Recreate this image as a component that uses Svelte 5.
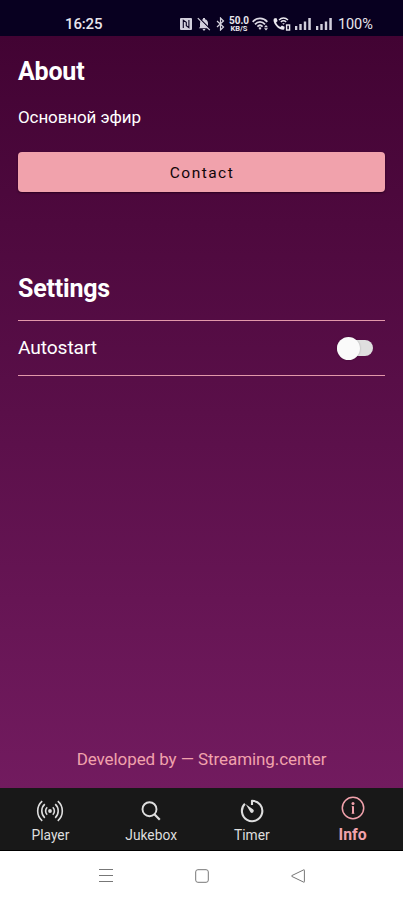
<script>
    let active = "Info";
    let autostart = false;

    const tabs = ["Player", "Jukebox", "Timer", "Info"];
    const signals = [0, 1];

    function handleClickToggle() {
        autostart = !autostart;
    }
</script>

<div class="phone">
    <header class="status">
        <span class="time">16:25</span>
        <div class="status-icons">
            <svg class="nfc" width="12" height="12" viewBox="0 0 12 12">
                <rect x="0" y="0" width="12" height="12" rx="1" fill="#d2cfdc" />
                <path d="M3.300 10V2.300l3 2V8M8.900 2v7.700l-2.600-2V4" fill="none" stroke="#080020" stroke-width="1.100" />
            </svg>
            <svg class="bell" width="14" height="14" viewBox="0 0 14 14">
                <path d="M3 10V6.500C3 4 4.500 2.600 6 2.200V1h2v1.200c2 .5 3 2 3 4.300V10l1.200 1.200H1.800zM5.700 12h2.600c0 2-2.600 2-2.600 0z" fill="#d2cfdc" />
                <path d="M1.800.8l12 12" stroke="#080020" stroke-width="1.300" />
                <path d="M.8 1.200l12 12" stroke="#d2cfdc" stroke-width="1.200" />
            </svg>
            <svg class="bluetooth" width="9" height="14" viewBox="0 0 9 14">
                <path d="M1 4l6.500 6L4.500 13V1l3 3L1 10" fill="none" stroke="#d6d3de" stroke-width="1.200" />
            </svg>
            <div class="speed"><b>50.0</b><span>KB/S</span></div>
            <svg class="wifi" width="17" height="14" viewBox="0 0 17 14">
                <g fill="none" stroke="#dedbe5" stroke-width="1.800">
                    <path d="M.7 4.800c4-4.600 10.600-4.600 14.600 0" />
                    <path d="M3 7.300c3-3.200 7-3.200 10 0" />
                    <path d="M5.400 9.600c1.700-1.700 3.500-1.700 5.200 0" />
                </g>
                <path d="M6.500 11l1.500-1 1.500 1L8 13zM12 10.300l2-2.300 2 2.300zM12 11.300h4l-2 2.300z" fill="#dedbe5" />
            </svg>
            <svg class="call" width="18" height="14" viewBox="0 0 18 14">
                <path d="M1 1.600l2.400-.5 1.200 3-1.500 1.300c.9 2 2.300 3.500 4.300 4.500l1.500-1.500 2.700 1.300-.3 2.500c-1 1.300-4.800.2-7-2C1.900 7.900.4 4.900.5 3z" fill="#ebe9ef" />
                <path d="M6 3c2.700-2.700 6.300-2.700 9 0M7.800 5c1.700-1.500 3.700-1.500 5.400 0" fill="none" stroke="#ebe9ef" stroke-width="1.400" />
                <path d="M9.200 6.300h2.600l-1.300 1.500z" fill="#ebe9ef" />
                <rect x="13.600" y="8" width="3" height="5" fill="none" stroke="#ebe9ef" stroke-width="1.400" />
            </svg>
            {#each signals as signal}
            <svg class="signal" width="17" height="12" viewBox="0 0 17 12">
                <path d="M0 8h2.300v4H0zM4.300 6h2.400v6H4.300zM8.800 3.500h2.400V12H8.800zM13.300 0h2.500v12h-2.500z" fill="#d2cfdc" />
            </svg>
            {/each}
        </div>
        <span class="battery">100%</span>
    </header>

    <main>
        <h1>About</h1>
        <p class="station">Основной эфир</p>
        <button class="contact">Contact</button>

        <h2>Settings</h2>
        <div class="setting">
            <span>Autostart</span>
            <button class="toggle" class:on={autostart} aria-label="Autostart" on:click={handleClickToggle}>
                <i></i>
            </button>
        </div>

        <p class="credit">Developed by — Streaming.center</p>
    </main>

    <nav class="tabs">
        {#each tabs as tab}
        <button class="tab" class:active={tab === active} on:click={() => active = tab}>
            {#if tab === "Player"}
            <svg width="28" height="28" viewBox="0 0 28 28">
                <circle cx="14" cy="14" r="1.900" fill="currentColor" />
                <path d="M11.200 10.200a5.300 5.300 0 0 0 0 7.600M8.800 7.200a9.200 9.200 0 0 0 0 13.600M6.200 4.200a12.900 12.900 0 0 0 0 19.600M16.800 10.200a5.300 5.300 0 0 1 0 7.600M19.200 7.200a9.200 9.200 0 0 1 0 13.600M21.800 4.200a12.900 12.900 0 0 1 0 19.600" fill="none" stroke="currentColor" stroke-width="1.600" />
            </svg>
            {:else if tab === "Jukebox"}
            <svg width="28" height="28" viewBox="0 0 28 28">
                <circle cx="12.500" cy="12.200" r="7" fill="none" stroke="currentColor" stroke-width="1.900" />
                <path d="M17.400 17.200l5.400 5.600" fill="none" stroke="currentColor" stroke-width="2.200" />
            </svg>
            {:else if tab === "Timer"}
            <svg width="28" height="28" viewBox="0 0 28 28">
                <path d="M14 8V3.800a10.200 10.200 0 1 1-7.100 3" fill="none" stroke="currentColor" stroke-width="2.100" stroke-linejoin="round" />
                <path d="M7.800 7.300l7.400 5.200a1.900 1.900 0 0 1-2.700 2.700z" fill="currentColor" />
            </svg>
            {:else}
            <svg width="28" height="28" viewBox="0 0 28 28">
                <circle cx="14" cy="14" r="10.700" fill="none" stroke="currentColor" stroke-width="1.500" />
                <circle cx="14" cy="9.500" r="1.500" fill="currentColor" />
                <path d="M14 12.300v7.200" fill="none" stroke="currentColor" stroke-width="2" />
                <path d="M12.700 12.700H14M12.600 19.300h2.800" fill="none" stroke="currentColor" stroke-width=".8" />
            </svg>
            {/if}
            <span>{tab}</span>
        </button>
        {/each}
    </nav>

    <footer class="system">
        <svg width="14" height="14" viewBox="0 0 14 14">
            <path d="M0 .5h14M0 6.500h14M0 12.500h14" />
        </svg>
        <svg width="14" height="14" viewBox="0 0 14 14">
            <rect x=".7" y=".7" width="12.600" height="12.600" rx="2.200" />
        </svg>
        <svg width="14" height="14" viewBox="0 0 14 14">
            <path d="M12.800.8L.8 6.600q-.6.400 0 .8l12 5.800q.6.200.6-.5V1.300q0-.7-.6-.5z" />
        </svg>
    </footer>
</div>

<style>
    .phone {
        width: 403px;
        height: 900px;
        display: flex;
        flex-direction: column;
        overflow: hidden;
        font-family: Roboto, "Noto Sans", sans-serif;
        color: #fff;
    }
    button {
        border: 0;
        padding: 0;
        font-family: inherit;
        cursor: pointer;
    }
    .status {
        height: 36px;
        box-sizing: border-box;
        padding: 12px 30px 0 65px;
        display: flex;
        align-items: center;
        background: #080020;
        color: #e8e6ed;
    }
    .time {
        font-size: 15px;
        font-weight: 500;
        letter-spacing: -0.15px;
    }
    .status-icons {
        display: flex;
        align-items: center;
        margin-left: auto;
    }
    .bell {
        margin-left: 5px;
    }
    .bluetooth {
        margin-left: 5px;
    }
    .speed {
        width: 20px;
        margin: 0 3px 0 4px;
        display: flex;
        flex-direction: column;
        align-items: center;
        font-size: 10px;
        line-height: 8px;
    }
    .speed span {
        margin-top: 1px;
        font-size: 7.5px;
        font-weight: 700;
        line-height: 6px;
    }
    .call {
        margin-left: 4px;
    }
    .signal {
        margin-left: 4px;
    }
    .battery {
        width: 35px;
        margin-left: 5px;
        font-size: 14.5px;
        letter-spacing: -0.1px;
        white-space: nowrap;
    }
    main {
        height: 752px;
        box-sizing: border-box;
        padding: 20px 18px 17px;
        display: flex;
        flex-direction: column;
        background: linear-gradient(#420333, #721b5f);
    }
    h1, h2 {
        margin: 0;
        font-size: 25px;
        line-height: 32px;
        font-weight: 700;
        letter-spacing: -0.2px;
    }
    .station {
        margin: 17px 0 23px;
        font-size: 17px;
        line-height: 24px;
        letter-spacing: -0.1px;
    }
    .contact {
        height: 40px;
        flex: none;
        padding: 1px 0 0 1px;
        border-radius: 4px;
        background: #f1a2ac;
        color: #100508;
        font-size: 15.5px;
        letter-spacing: 1.45px;
        box-shadow: 0 1px 2px #2a0020;
    }
    h2 {
        margin-top: 81px;
    }
    .setting {
        height: 56px;
        box-sizing: border-box;
        margin-top: 15px;
        padding-right: 12px;
        border-top: 1px solid #e398aa;
        border-bottom: 1px solid #e398aa;
        display: flex;
        align-items: center;
        justify-content: space-between;
        font-size: 19.2px;
        letter-spacing: -0.1px;
    }
    .setting span {
        margin-top: -1px;
    }
    .toggle {
        width: 36px;
        height: 16px;
        border-radius: 8px;
        background: #dfdfdf;
        display: flex;
        align-items: center;
    }
    .toggle.on {
        justify-content: flex-end;
        background: #f1a2ac;
    }
    .toggle i {
        width: 23px;
        height: 23px;
        border-radius: 50%;
        background: #fafafa;
        box-shadow: 0 0 2px #0004;
    }
    .credit {
        margin: auto 0 0;
        text-align: center;
        font-size: 17px;
        line-height: 24px;
        letter-spacing: -0.08px;
        color: #f1a2ac;
    }
    .tabs {
        height: 63px;
        box-sizing: border-box;
        border-bottom: 1px solid #000;
        display: grid;
        grid-template-columns: repeat(4, 1fr);
        background: #181818;
    }
    .tab {
        display: flex;
        flex-direction: column;
        align-items: center;
        padding-top: 9px;
        background: none;
        color: #dedede;
        font-size: 13.8px;
        line-height: 20px;
    }
    .tab.active {
        padding-top: 6px;
        color: #f1a2ac;
        font-size: 15.8px;
        line-height: 25px;
        font-weight: 700;
    }
    .system {
        height: 49px;
        box-sizing: border-box;
        display: flex;
        justify-content: center;
        align-items: center;
        gap: 82px;
        background: #fff;
    }
    .system svg {
        fill: none;
        stroke: #777;
        stroke-width: 1;
    }
</style>
